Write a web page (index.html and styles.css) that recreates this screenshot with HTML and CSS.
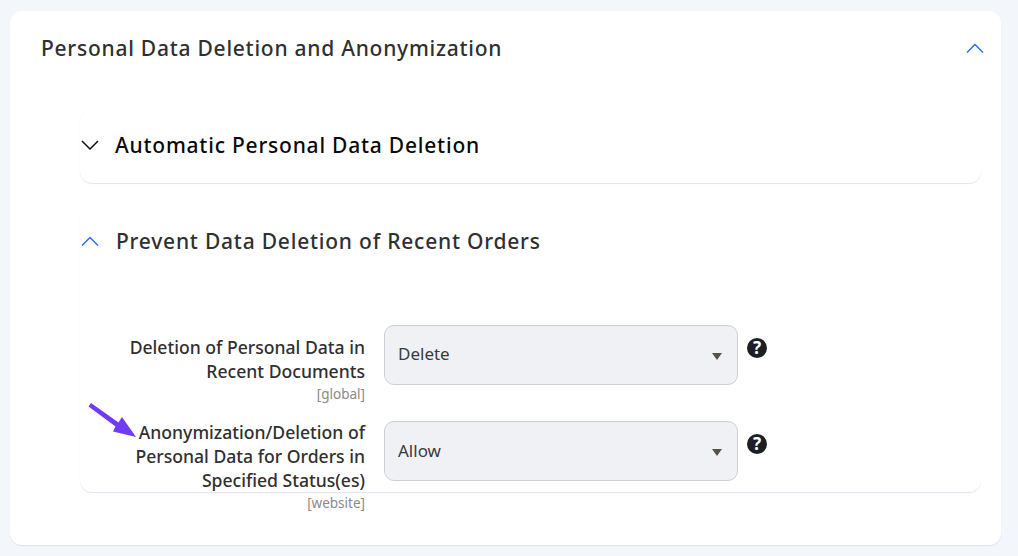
FILE: index.html
```html
<!DOCTYPE html>
<html lang="en">
<head>
<meta charset="utf-8">
<title>Personal Data Deletion and Anonymization</title>
<link rel="stylesheet" href="styles.css">
</head>
<body>
<main class="card">
  <header class="card-head">
    <h2 class="card-title">Personal Data Deletion and Anonymization</h2>
    <svg class="chev chev-main" viewBox="0 0 18 10" width="18" height="10"><path d="M1 9.500 9 1.500l8 8"/></svg>
  </header>
  <section class="panel panel-closed">
    <div class="panel-head">
      <svg class="chev chev-dark" viewBox="0 0 18 10" width="18" height="10"><path d="M1 1l8 8 8-8"/></svg>
      <h3 class="panel-title panel-title-dark">Automatic Personal Data Deletion</h3>
    </div>
  </section>
  <section class="panel panel-open">
    <div class="panel-head">
      <svg class="chev" viewBox="0 0 18 10" width="18" height="10"><path d="M1 9.500 9 1.500l8 8"/></svg>
      <h3 class="panel-title">Prevent Data Deletion of Recent Orders</h3>
    </div>
    <div class="form">
      <div class="row">
        <div class="label">
          <div class="label-text">Deletion of Personal Data in Recent Documents</div>
          <div class="scope">[global]</div>
        </div>
        <div class="select"><span>Delete</span><i class="caret"></i></div>
        <span class="help">?</span>
      </div>
      <div class="row row-arrow">
        <svg class="arrow" viewBox="0 0 52 40" width="52" height="40"><path d="M.5 3.500 3 0 30.500 19.500 34 14 48 34 25 28.500 27.500 23.500Z"/></svg>
        <div class="label label-tall">
          <div class="label-text">Anonymization/Deletion of Personal Data for Orders in Specified Status(es)</div>
          <div class="scope">[website]</div>
        </div>
        <div class="select select-low"><span>Allow</span><i class="caret"></i></div>
        <span class="help">?</span>
      </div>
    </div>
  </section>
</main>
</body>
</html>
```
FILE: styles.css
```css
* { box-sizing: border-box; }
html, body { margin: 0; height: 100%; overflow: hidden; }
body {
  background: #f3f6fb;
  padding: 11px 17px 0 10px;
  font-family: "Noto Sans", "Open Sans", sans-serif;
  color: #303030;
}
.card {
  height: 534px;
  background: #fff;
  border-radius: 12px;
  box-shadow: 0 1px 1px #dfe3ec;
  padding: 0 20px 0 31px;
}
.card-head {
  height: 76px;
  display: flex;
  align-items: center;
  justify-content: space-between;
  padding-bottom: 3px;
}
.card-title {
  margin: 0;
  font-size: 21px;
  font-weight: 500;
  letter-spacing: 0.75px;
  color: #303030;
}
.chev { fill: none; stroke: #2f6fef; stroke-width: 1.5; flex: none; margin-left: 1px; }
.chev-main { margin-right: -3px; }
.chev-dark { stroke: #111; }
.panel {
  margin-left: 39px;
  background: #fff;
  border-radius: 12px;
  box-shadow: 0 1px 1px #e2e5ee, 0 0 1px #f6f7fa;
}
.panel-closed { height: 73px; margin-top: 23px; padding-top: 21px; }
.panel-closed .panel-head { gap: 16px; }
.panel-open { height: 285px; margin-top: 24px; padding-top: 20px; }
.panel-head { display: flex; align-items: center; gap: 17px; height: 28px; }
.panel-title {
  margin: 0;
  font-size: 21px;
  font-weight: 500;
  letter-spacing: 0.78px;
  color: #303030;
}
.panel-title-dark { color: #0a0a0a; }
.form { padding-top: 70px; display: flex; flex-direction: column; gap: 36px; }
.row { display: flex; align-items: flex-start; position: relative; height: 60px; }
.label { width: 285px; flex: none; text-align: right; padding: 10px 0 0 40px; }
.label-tall { padding-top: 0; margin-top: -1px; }
.label-text { font-size: 17.6px; font-weight: 500; line-height: 24px; color: #303030; }
.scope { font-size: 13.5px; line-height: 22px; color: #8a8a8a; }
.select {
  width: 354px;
  height: 60px;
  margin-left: 19px;
  background: #f0f1f5;
  border: 1px solid #cfcfd2;
  border-radius: 10px;
  display: flex;
  align-items: center;
  justify-content: space-between;
  padding: 0 15px 3px 13px;
  font-size: 17px;
  color: #3a3a3a;
  flex: none;
}
.select-low { padding-bottom: 1px; }
.select-low .caret { margin-top: 4px; }
.caret {
  width: 0; height: 0;
  border-left: 5.5px solid transparent;
  border-right: 5.5px solid transparent;
  border-top: 7px solid #575249;
  margin-top: 6px;
}
.help {
  width: 20px; height: 20px;
  margin: 13px 0 0 9px;
  border-radius: 50%;
  background: #1c1f24;
  color: #fff;
  font-size: 17px;
  font-weight: 700;
  line-height: 20px;
  text-align: center;
  flex: none;
}
.arrow { position: absolute; left: 8px; top: -18px; fill: #6f3bf5; }
```
